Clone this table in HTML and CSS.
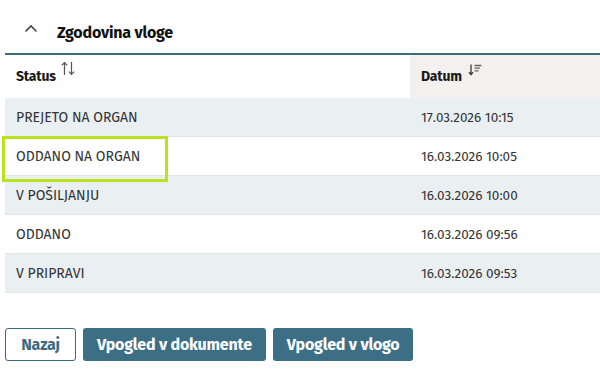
FILE: index.html
```html
<!DOCTYPE html>
<html lang="sl">
<head>
<meta charset="utf-8">
<title>Zgodovina vloge</title>
<link rel="stylesheet" href="styles.css">
</head>
<body>
<section class="panel">
  <header class="panel-head">
    <svg class="chev" width="14" height="9" viewBox="0 0 14 9"><path d="M1.5 7.5 L7 2 L12.5 7.5" fill="none" stroke="#444" stroke-width="1.6"/></svg>
    <h2 class="panel-title">Zgodovina vloge</h2>
  </header>
  <div class="table-wrap">
    <table class="history">
      <thead>
        <tr>
          <th class="col-status"><span class="th-in">Status
            <svg class="sort" width="14" height="15" viewBox="0 0 14 15"><path d="M3.5 14 V1.5 M0.8 4.3 L3.5 1.5 L6.2 4.3" fill="none" stroke="#555" stroke-width="1.2"/><path d="M10.5 1 V13.5 M7.8 10.7 L10.5 13.5 L13.2 10.7" fill="none" stroke="#555" stroke-width="1.2"/></svg></span>
          </th>
          <th class="col-date"><span class="th-in">Datum
            <svg class="sort sort-d" width="14" height="12" viewBox="0 0 14 12"><path d="M3 0.5 V10.5 M1 8.3 L3 10.7 L5 8.3" fill="none" stroke="#444" stroke-width="1.4"/><path d="M6.5 1.5 H13.5 M6.5 4.2 H12 M6.5 6.9 H10.5" fill="none" stroke="#666" stroke-width="1.3"/></svg></span>
          </th>
        </tr>
      </thead>
      <tbody>
        <tr><td><div class="cell">PREJETO NA ORGAN</div></td><td><div class="cell date">17.03.2026 10:15</div></td></tr>
        <tr><td><div class="cell focused">ODDANO NA ORGAN</div></td><td><div class="cell date">16.03.2026 10:05</div></td></tr>
        <tr><td><div class="cell">V POŠILJANJU</div></td><td><div class="cell date">16.03.2026 10:00</div></td></tr>
        <tr><td><div class="cell">ODDANO</div></td><td><div class="cell date">16.03.2026 09:56</div></td></tr>
        <tr><td><div class="cell">V PRIPRAVI</div></td><td><div class="cell date">16.03.2026 09:53</div></td></tr>
      </tbody>
    </table>
  </div>
  <div class="actions">
    <button class="btn btn-outline">Nazaj</button>
    <button class="btn btn-primary">Vpogled v dokumente</button>
    <button class="btn btn-primary">Vpogled v vlogo</button>
  </div>
</section>
</body>
</html>
```
FILE: styles.css
```css
* { box-sizing: border-box; }
body {
  margin: 0;
  background: #fff;
  font-family: "Fira Sans", "Open Sans", "Noto Sans", sans-serif;
  color: #222;
}
.panel { width: 600px; }
.panel-head {
  display: flex;
  align-items: center;
  height: 53px;
  padding: 12px 0 0 24px;
}
.chev { display: block; margin-top: -8px; }
.panel-title {
  margin: 0 0 0 19px;
  font-size: 16px;
  font-weight: 700;
  color: #111;
  letter-spacing: -0.2px;
}
.table-wrap { padding-left: 5px; }
.history {
  width: 100%;
  border-collapse: collapse;
  border-top: 2px solid #3c6c82;
}
.history th {
  height: 44px;
  text-align: left;
  font-size: 14px;
  font-weight: 700;
  color: #1a1a1a;
  padding: 0 0 0 11px;
  vertical-align: middle;
  letter-spacing: -0.2px;
}
.th-in { display: inline-flex; align-items: flex-start; }
.col-status { width: 405px; background: #fff; }
.col-date { background: #f2f1f0; }
.sort { margin-left: 5px; margin-top: -7px; }
.sort-d { margin-left: 6px; margin-top: -4px; }
.history td {
  padding: 0;
  border-bottom: 1px solid #e1e5e8;
}
.cell {
  position: relative;
  display: flex;
  align-items: center;
  height: 38px;
  padding-left: 11px;
  font-size: 14px;
  color: #333;
}
.cell.date { font-size: 13.5px; }
.history tbody tr:nth-child(odd) td { background: #eaeff2; }
.history tbody tr:nth-child(even) td { background: #fff; }
.focused::after {
  content: "";
  position: absolute;
  z-index: 2;
  left: -3px;
  top: -1px;
  width: 160px;
  height: 40px;
  border: 3px solid #b9e31f;
}
.actions {
  display: flex;
  gap: 7px;
  padding: 35px 0 0 5px;
}
.btn {
  height: 33px;
  padding: 0 14px;
  font-family: inherit;
  font-size: 16px;
  font-weight: 700;
  border-radius: 3px;
  letter-spacing: -0.2px;
}
.btn-outline {
  background: #fff;
  color: #3c6c82;
  border: 1.5px solid #3c6c82;
  width: 71px;
}
.btn-primary {
  background: #3c6f86;
  color: #fff;
  border: none;
}
```
